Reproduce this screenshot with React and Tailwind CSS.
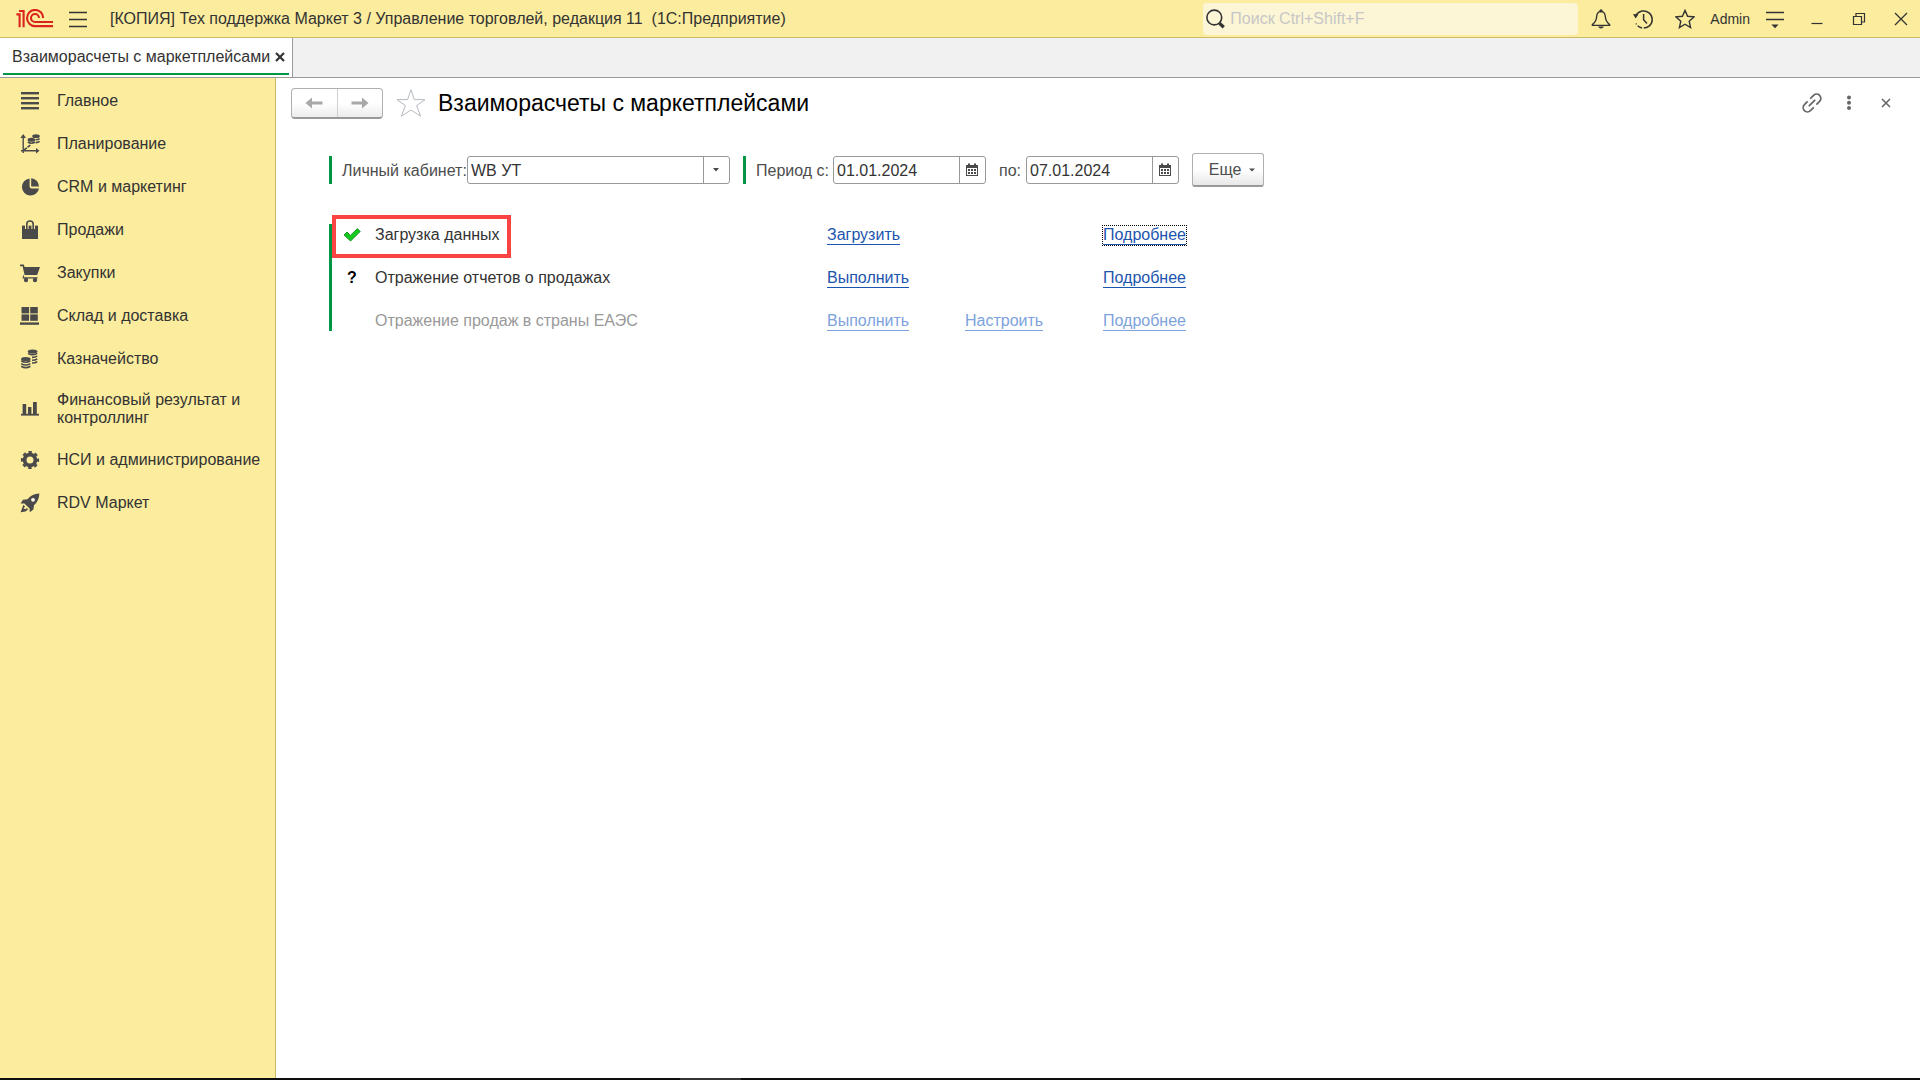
import React from "react";

const ink = "#4a4a4a";

function Svg({ size = 20, children, className = "", ...rest }) {
  return (
    <svg
      width={size}
      height={size}
      viewBox={`0 0 ${size} ${size}`}
      fill="none"
      stroke="currentColor"
      aria-hidden="true"
      className={`shrink-0 ${className}`}
      {...rest}
    >
      {children}
    </svg>
  );
}

const icons = {
  home: (
    <g stroke="none" fill={ink}>
      <rect x="1" y="1" width="18" height="2.4" />
      <rect x="1" y="6" width="18" height="2.4" />
      <rect x="1" y="11" width="18" height="2.4" />
      <rect x="1" y="16" width="18" height="2.4" />
    </g>
  ),
  plan: (
    <g stroke={ink} strokeWidth="1.4">
      <path d="M3.2 19V3M1 16.7H17" />
      <path d="M3.2 0L6 4H0.4zM19.5 16.7L16 14v5.4z" fill={ink} stroke="none" />
      <path d="M4 16L11 10.6" strokeDasharray="3.5 1" strokeWidth="1.6" />
      <ellipse cx="16" cy="2.2" rx="3.8" ry="1.9" fill={ink} stroke="none" />
      <ellipse cx="11.4" cy="5.8" rx="3.8" ry="2" fill={ink} stroke="none" />
      <path d="M15.6 5.8q2.8 0 4-1.2M15.6 8.6q2.8 0 4-1.2M7.8 8q3.6 2.4 7.2 0" strokeWidth="1.6" />
    </g>
  ),
  pie: (
    <g stroke="none" fill={ink}>
      <path d="M9.6 1.4A8.6 8.6 0 1 0 19 11.4L11.6 11.4Q9.6 11.4 9.6 9.4Z" />
      <path d="M11.2 1.2A8.6 8.6 0 0 1 19 9.4H11.2Z" />
    </g>
  ),
  bag: (
    <g stroke="none" fill={ink}>
      <path d="M2 5.6H18V19H2Z" />
      <path d="M6.8 9V4.2a3.2 3.2 0 0 1 6.4 0V9" fill="none" stroke="#fbec9e" strokeWidth="3.6" />
      <path d="M6.8 9V4.2a3.2 3.2 0 0 1 6.4 0V9" fill="none" stroke={ink} strokeWidth="1.6" />
    </g>
  ),
  cart: (
    <g stroke="none" fill={ink}>
      <path d="M0 1.4H3.8L4.6 4H20L17.2 12H4.6L2.6 3.2H0Z" />
      <path d="M4.2 12.6L3.8 14.2H17.6V15.6H2.4L3.4 12Z" />
      <circle cx="6" cy="17" r="2.2" />
      <circle cx="15" cy="17" r="2.2" />
    </g>
  ),
  warehouse: (
    <g stroke="none" fill={ink}>
      <rect x="1.5" y="1" width="7.6" height="6.4" />
      <rect x="10.2" y="1" width="7.6" height="6.4" />
      <rect x="1.5" y="8.4" width="7.6" height="6.4" />
      <rect x="10.2" y="8.4" width="7.6" height="6.4" />
      <rect x="0" y="16.4" width="19" height="2.4" />
    </g>
  ),
  coins: (
    <g stroke={ink} strokeWidth="1.6">
      <ellipse cx="12.6" cy="2.6" rx="4.8" ry="2.1" fill={ink} stroke="none" />
      <path d="M8 4.4q4.6 2.8 9.2 0M12 8.4q3.6 0 5.2-1.4M12 11.2q3.6 0 5.2-1.4M12 14q3.6 0 5.2-1.4" />
      <ellipse cx="5.8" cy="10" rx="4.8" ry="2.1" fill={ink} stroke="none" />
      <path d="M1.2 11.8q4.6 2.8 9.2 0M1.2 14.6q4.6 2.8 9.2 0M1.2 17.2q4.6 2.8 9.2 0" />
    </g>
  ),
  bars: (
    <g stroke="none" fill={ink}>
      <rect x="2.6" y="5" width="3.6" height="11" />
      <rect x="8" y="8" width="3.4" height="8" />
      <rect x="13" y="3" width="3.8" height="13" />
      <rect x="1" y="14.8" width="18" height="1.8" />
    </g>
  ),
  gear: (
    <g stroke={ink}>
      <circle cx="10" cy="10" r="5.4" strokeWidth="3.8" />
      <circle cx="10" cy="10" r="8" strokeWidth="2.2" strokeDasharray="3.4 2.88" strokeDashoffset="1.7" />
    </g>
  ),
  rocket: (
    <g stroke="none" fill={ink}>
      <path d="M19.4 0.6Q11 1.2 7.6 6.2L3 6.8 0.6 10.6 4.4 10.4 9.6 15.4 9.8 19.2 13.4 16.4 14 12.2Q19 8.4 19.4 0.6Z" />
      <circle cx="13" cy="6.8" r="1.9" fill="#fffbe6" />
      <path d="M3.4 11.8L5 13.4 3.6 15.4 5.4 16.2 7 15 8 16.4 5.4 18.6 0.6 19.2Z" />
    </g>
  ),
};

const sections = [
  ["home", "Главное"],
  ["plan", "Планирование"],
  ["pie", "CRM и маркетинг"],
  ["bag", "Продажи"],
  ["cart", "Закупки"],
  ["warehouse", "Склад и доставка"],
  ["coins", "Казначейство"],
  ["bars", "Финансовый результат и контроллинг"],
  ["gear", "НСИ и администрирование"],
  ["rocket", "RDV Маркет"],
];

function Logo() {
  return (
    <svg width="38" height="20" viewBox="0 0 38 20" fill="none" stroke="#dc241f" strokeWidth="2.1" className="shrink-0" role="img" aria-label="1С">
      <path d="M0.4 5.4H3.6V18.2M3 2H7.6V18.2" />
      <path d="M27.2 9A8.1 8.1 0 1 0 19 17.1H37" />
      <path d="M23 9A4 4 0 1 0 19 13H37" />
    </svg>
  );
}

function TopBar() {
  return (
    <header className="flex h-[38px] shrink-0 items-center border-b border-[#c9bb68] bg-[#fbec9e] text-[#333333]">
      <span className="ml-4 flex"><Logo /></span>
      <button type="button" aria-label="Главное меню" className="ml-[14px] flex">
        <Svg strokeWidth="1.4"><path d="M1 3.5H19M1 10.5H19M1 17.5H19" /></Svg>
      </button>
      <h1 className="ml-[22px] flex-1 truncate whitespace-pre">
        {"[КОПИЯ] Тех поддержка Маркет 3 / Управление торговлей, редакция 11  (1С:Предприятие)"}
      </h1>
      <label className="mr-[13px] flex h-8 w-[375px] items-center gap-1 rounded-sm bg-[#fdf6d6] pl-[3px]">
        <Svg strokeWidth="1.6">
          <circle cx="8.3" cy="8.5" r="7.4" />
          <path d="M13.4 14.2L17.8 18.2" strokeWidth="3.2" />
        </Svg>
        <input type="search" aria-label="Поиск" placeholder="Поиск Ctrl+Shift+F" className="min-w-0 flex-1 bg-transparent outline-none placeholder:text-[#c6c6c6]" />
      </label>
      <div className="flex items-center gap-[22px]">
        <button type="button" aria-label="Уведомления">
          <Svg strokeWidth="1.4">
            <path d="M10 2.4C6.6 2.6 5.8 5 5.6 8 5.4 12 4 13.4 1.4 15.6V16.4H18.6V15.6C16 13.4 14.6 12 14.4 8 14.2 5 13.4 2.6 10 2.4Z" />
            <circle cx="10" cy="1.8" r="0.9" fill="currentColor" />
            <path d="M7 17.6h6q-1 2-3 2t-3-2z" fill="currentColor" stroke="none" />
          </Svg>
        </button>
        <button type="button" aria-label="История">
          <Svg strokeWidth="1.5">
            <path d="M3 6.5A8.6 8.6 0 1 1 3 14.5" strokeDasharray="36 1.6 5 1.6 9" />
            <path d="M0 5L5.4 5.6 2.6 9.4Z" fill="currentColor" stroke="none" />
            <path d="M10.6 5V10.8L14 14.6" />
          </Svg>
        </button>
        <button type="button" aria-label="Избранное">
          <Svg strokeWidth="1.4"><path d="M10 1.4L12.6 7.3 19 7.9 14.2 12.2 15.6 18.6 10 15.2 4.4 18.6 5.8 12.2 1 7.9 7.4 7.3Z" /></Svg>
        </button>
      </div>
      <button type="button" className="ml-[15px] text-sm">Admin</button>
      <button type="button" aria-label="Сервис и настройки" className="ml-[15px]">
        <Svg strokeWidth="1.5">
          <path d="M1 3.5H19M1 10.5H19" />
          <path d="M6.4 15.6H13.6L10 19.2Z" fill="currentColor" stroke="none" />
        </Svg>
      </button>
      <div className="mr-[9px] ml-[22px] flex items-center gap-[22px]">
        <button type="button" aria-label="Свернуть"><Svg strokeWidth="1.2"><path d="M4.5 14.5H15.5" /></Svg></button>
        <button type="button" aria-label="Развернуть">
          <Svg strokeWidth="1.2"><path d="M4.5 7.5H12.5V15.5H4.5ZM7 7.5V4.5H15.5V13H12.5" /></Svg>
        </button>
        <button type="button" aria-label="Закрыть"><Svg strokeWidth="1.3"><path d="M4 4L16 16M16 4L4 16" /></Svg></button>
      </div>
    </header>
  );
}

function TabBar() {
  return (
    <nav className="flex h-10 shrink-0 border-b border-[#9b9b9b] bg-[#f1f1f1]" aria-label="Открытые окна">
      <div className="flex border-r border-[#9b9b9b] bg-white px-[3px] pb-[2px]">
        <div className="flex items-center gap-1 border-b-2 border-[#009646] pt-[3px] pr-[3px] pl-[9px] text-[#333333]">
          <a href="#settlements">Взаиморасчеты с маркетплейсами</a>
          <button type="button" aria-label="Закрыть вкладку">
            <Svg size={12} strokeWidth="2.2"><path d="M2 2L10 10M10 2L2 10" /></Svg>
          </button>
        </div>
      </div>
    </nav>
  );
}

function Sidebar() {
  return (
    <nav className="w-[276px] shrink-0 border-r border-[#c9bb68] bg-[#fbec9e] pt-px" aria-label="Разделы">
      <ul>
        {sections.map(([icon, label]) => (
          <li key={icon}>
            <a href={`#${icon}`} className="flex min-h-[43px] items-center gap-[17px] py-[11px] pr-2 pl-5 leading-[18px] text-[#333333]">
              <Svg>{icons[icon]}</Svg>
              <span>{label}</span>
            </a>
          </li>
        ))}
      </ul>
    </nav>
  );
}

function CalendarIcon() {
  return (
    <Svg size={14}>
      <g fill="#4a4a4a" stroke="none">
        <path d="M1 2H13V5H1Z" />
        <path d="M3 0.5h2v3h-2zM9 0.5h2v3h-2z" />
        <path d="M3 6h2v2h-2zM6 6h2v2h-2zM9 6h2v2h-2zM3 9h2v2h-2zM6 9h2v2h-2zM9 9h2v2h-2z" />
      </g>
      <rect x="1.5" y="2.5" width="11" height="10" stroke="#4a4a4a" />
    </Svg>
  );
}

function Field({ id, value, width, buttonLabel, children }) {
  return (
    <div className={`flex h-7 rounded-[3px] border border-[#999999] bg-white ${width}`}>
      <input id={id} type="text" defaultValue={value} className="min-w-0 flex-1 bg-transparent pt-[2px] pl-[3px] text-[#333333] outline-none" />
      <button type="button" aria-label={buttonLabel} className="flex w-[26px] items-center justify-center border-l border-[#999999] pr-[2px]">
        {children}
      </button>
    </div>
  );
}

function Filters() {
  return (
    <form className="mt-[34px] ml-[53px] flex items-center text-[#4d4d4d]">
      <div className="flex h-7 items-center border-l-3 border-[#009646] pl-[10px]">
        <label htmlFor="account" className="w-[125px] pt-[2px] whitespace-nowrap">Личный кабинет:</label>
        <Field id="account" value="WB УТ" width="w-[263px]" buttonLabel="Выбрать">
          <Svg size={8}><path d="M1 2H7L4 5.6Z" fill="#4a4a4a" stroke="none" /></Svg>
        </Field>
      </div>
      <div className="ml-[13px] flex h-7 items-center border-l-3 border-[#009646] pl-[10px]">
        <label htmlFor="from" className="w-[77px] pt-[2px]">Период с:</label>
        <Field id="from" value="01.01.2024" width="w-[153px]" buttonLabel="Дата начала"><CalendarIcon /></Field>
        <label htmlFor="to" className="ml-[13px] w-[27px] pt-[2px]">по:</label>
        <Field id="to" value="07.01.2024" width="w-[153px]" buttonLabel="Дата окончания"><CalendarIcon /></Field>
      </div>
      <button type="button" className="ml-[13px] flex h-[34px] w-[72px] items-center justify-center gap-2 rounded-[3px] border border-b-2 border-[#b0b0b0] border-b-[#999999] bg-gradient-to-b from-white from-50% to-[#e8e8e8] pl-2">
        Еще
        <Svg size={6}><path d="M0 1.4H6L3 4.4Z" fill="#4a4a4a" stroke="none" /></Svg>
      </button>
    </form>
  );
}

function Action({ children, faded, focused }) {
  return (
    <a
      href="#action"
      aria-disabled={faded}
      className={`inline-block border-b leading-[18px] ${faded ? "border-[#7da2dc] text-[#7da2dc]" : "border-[#1c55ae] text-[#1c55ae]"} ${focused ? "outline-1 outline-dotted outline-black" : ""}`}
    >
      {children}
    </a>
  );
}

function Steps() {
  return (
    <section className="relative mt-[37px] ml-[53px] flex w-max border-l-3 border-[#009646]">
      <table className="-my-[11px] border-collapse text-left text-[#333333]">
        <tbody>
          <tr className="h-[43px]">
            <td className="w-[43px] pl-[11px]">
              <Svg size={18}><path d="M1 9L4 6L7.4 9.4L14.4 2.6L17.2 5.4L7.6 15Z" fill="#15c91d" stroke="#1c9a26" /></Svg>
            </td>
            <td className="w-[452px]">Загрузка данных</td>
            <td className="w-[138px]"><Action>Загрузить</Action></td>
            <td className="w-[138px]" />
            <td><Action focused>Подробнее</Action></td>
          </tr>
          <tr className="h-[43px]">
            <td className="pl-[15px] font-bold text-black">?</td>
            <td>Отражение отчетов о продажах</td>
            <td><Action>Выполнить</Action></td>
            <td />
            <td><Action>Подробнее</Action></td>
          </tr>
          <tr className="h-[43px]">
            <td />
            <td className="text-[#999999]">Отражение продаж в страны ЕАЭС</td>
            <td><Action faded>Выполнить</Action></td>
            <td><Action faded>Настроить</Action></td>
            <td><Action faded>Подробнее</Action></td>
          </tr>
        </tbody>
      </table>
      <div className="pointer-events-none absolute -top-[9px] left-0 h-[43px] w-[179px] border-4 border-[#fa4444]" />
    </section>
  );
}

export default function App() {
  return (
    <div className="flex min-h-screen flex-col bg-white font-['Liberation_Sans',Arial,sans-serif] text-base">
      <TopBar />
      <TabBar />
      <div className="flex flex-1">
        <Sidebar />
        <main className="min-w-0 flex-1">
          <div className="mt-[9px] flex h-8 items-center pr-6 pl-[15px]">
            <div className="flex h-[31px] w-[92px] rounded-[4px] border border-b-2 border-[#b0b0b0] border-b-[#999999] bg-gradient-to-b from-white from-50% to-[#ececec] text-[#a8a8a8]">
              <button type="button" aria-label="Назад" className="flex flex-1 items-center justify-center border-r border-[#cfcfcf]">
                <Svg size={18}><path d="M0.5 9L7 3.4V7.4H17.5V10.6H7V14.6Z" fill="currentColor" stroke="none" /></Svg>
              </button>
              <button type="button" aria-label="Вперед" className="flex flex-1 items-center justify-center">
                <Svg size={18}><path d="M17.5 9L11 3.4V7.4H0.5V10.6H11V14.6Z" fill="currentColor" stroke="none" /></Svg>
              </button>
            </div>
            <button type="button" aria-label="Добавить в избранное" className="ml-[13px] text-[#b4bac0]">
              <Svg size={30}><path d="M15 1.8L18.4 11.6H29L20.6 17.6L24.6 28.2L15 22L5.4 28.2L9.4 17.6L1 11.6H11.6Z" /></Svg>
            </button>
            <h2 className="ml-3 flex-1 text-[23px] text-black">Взаиморасчеты с маркетплейсами</h2>
            <div className="flex items-center gap-[17px] text-[#666666]">
              <button type="button" aria-label="Получить ссылку">
                <Svg strokeWidth="1.7">
                  <path d="M8.2 5.6L11.6 2.4a4.1 4.1 0 0 1 6 6L14.4 11.6M11.8 14.4L8.4 17.6a4.1 4.1 0 0 1-6-6L5.6 8.4M6.8 13.2L13.2 6.8" />
                </Svg>
              </button>
              <button type="button" aria-label="Еще">
                <Svg><g fill="currentColor" stroke="none"><circle cx="10" cy="4.6" r="2" /><circle cx="10" cy="9.8" r="2" /><circle cx="10" cy="15" r="2" /></g></Svg>
              </button>
              <button type="button" aria-label="Закрыть">
                <Svg strokeWidth="1.6"><path d="M6 6L14 14M14 6L6 14" /></Svg>
              </button>
            </div>
          </div>
          <Filters />
          <Steps />
        </main>
      </div>
      <footer className="flex h-[2px] shrink-0 bg-[#0e0e0e]">
        <div className="ml-[680px] w-[61px] bg-[#333333]" />
      </footer>
    </div>
  );
}
